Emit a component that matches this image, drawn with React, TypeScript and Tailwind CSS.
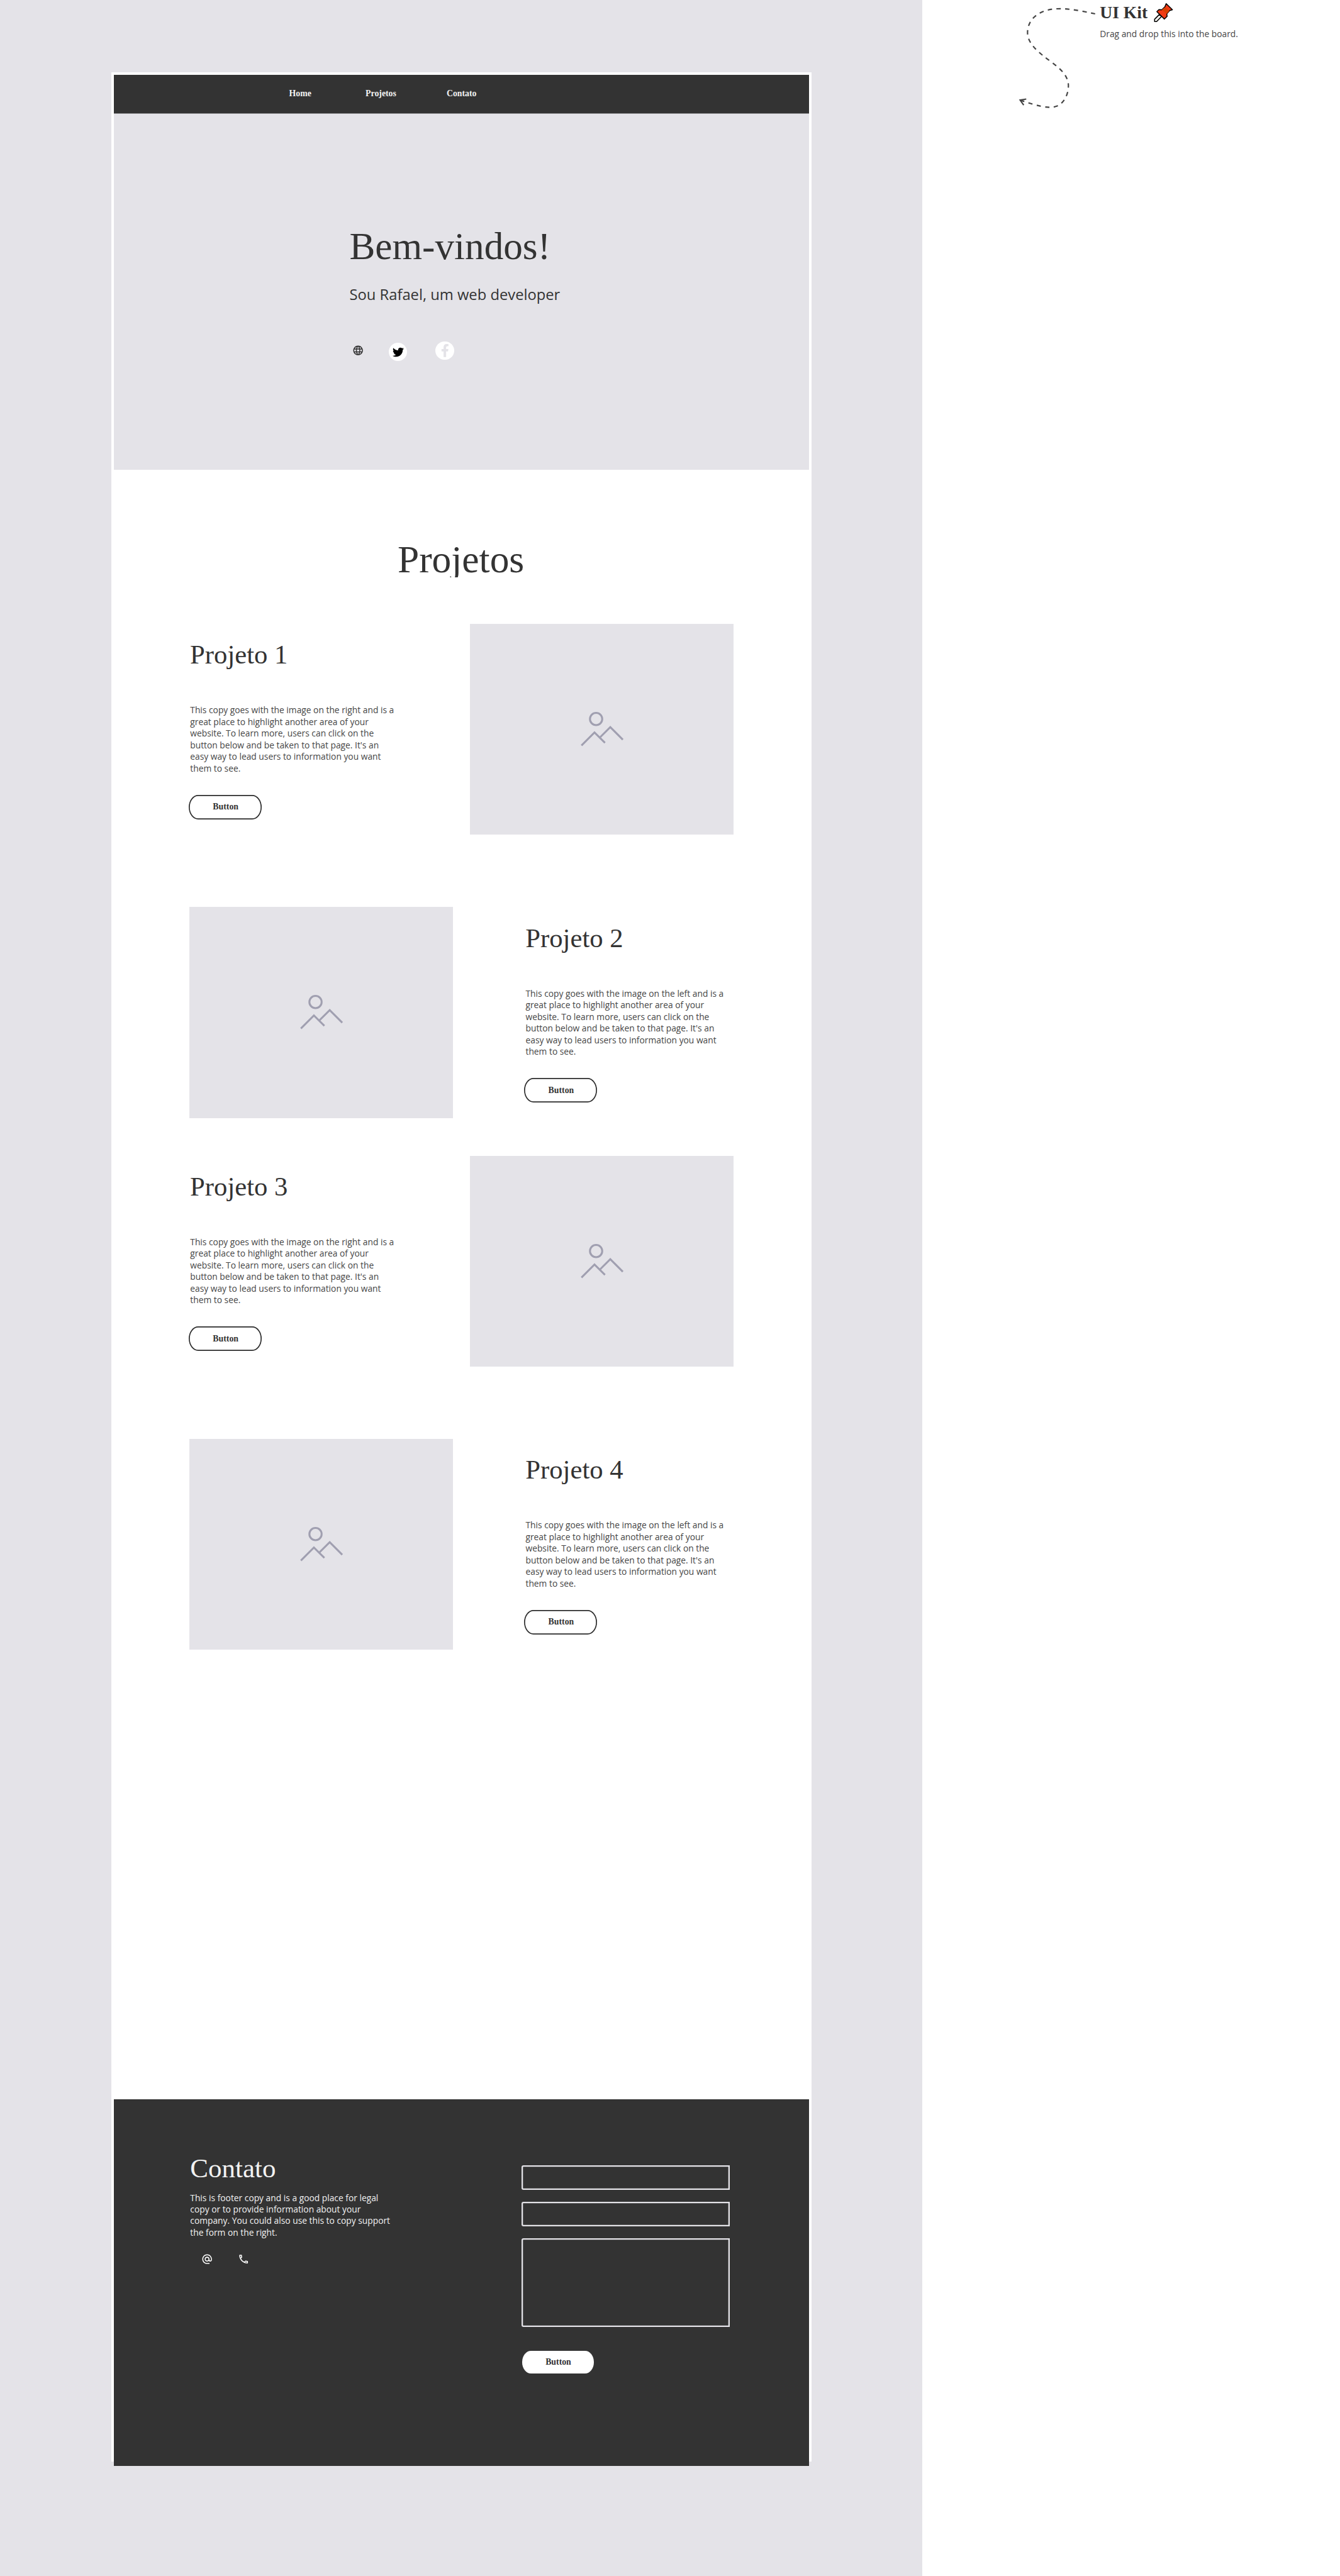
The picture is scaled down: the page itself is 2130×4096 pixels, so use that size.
import React from 'react';
import { MdAlternateEmail, MdLanguage, MdOutlineLocalPhone } from 'react-icons/md';
import { FaTwitter, FaFacebookF } from 'react-icons/fa';

const serif = "font-['Liberation_Serif','Times_New_Roman',serif]";
const sans = "font-['Open_Sans','Noto_Sans',sans-serif]";

function PlaceholderImage() {
  return (
    <div className="h-[335.3px] w-[419px] shrink-0 bg-[#e4e3e8]">
      <svg viewBox="0 0 546 437" className="block h-full w-full" fill="none" stroke="#a09fb0" strokeWidth="4">
        <circle cx="261.3" cy="197.1" r="12.7" />
        <path d="M231 252.1 L258 225 L279.7 246.6" />
        <path d="M269 235.6 L290.7 214 L316.7 240" />
      </svg>
    </div>
  );
}

function ProjectCopy({ title, side }: { title: string; side: string }) {
  return (
    <div className="w-[446.5px] shrink-0 pt-[25.2px]">
      <h3 className={`${serif} pl-[2px] text-[42.7px] leading-[48px] text-[#333333]`}>{title}</h3>
      <p className={`${sans} mt-[55.2px] pl-[2.2px] text-[13.81px] leading-[18.415px] whitespace-nowrap text-[#454545]`}>
        This copy goes with the image on the {side} and is a<br />
        great place to highlight another area of your<br />
        website. To learn more, users can click on the<br />
        button below and be taken to that page. It's an<br />
        easy way to lead users to information you want<br />
        them to see.
      </p>
      <button
        className={`${serif} mt-[32.7px] block h-[39px] w-[116.2px] rounded-[15px/19.5px] bg-white pl-[1px] text-[13.81px] leading-[18px] font-bold text-[#333333] shadow-[inset_0_0_0_1.7px_#2b2b2b]`}
      >
        Button
      </button>
    </div>
  );
}

function PushPin() {
  return (
    <svg viewBox="18 12 122 122" className="mt-[0.4px] ml-[9.8px] h-[31.2px] w-[31.2px]" stroke="#000" strokeLinejoin="round">
      <path d="M53 86 L23 116 L23 130 L36 130 L66 99 Z" fill="#f5f5f0" strokeWidth="6" />
      <path d="M95 19 L134 57 L117 62 L99 82 L101 98 L84 115 L37 69 L50 56 L68 57 L87 39 Z" fill="#f13a15" strokeWidth="6" />
      <path d="M88 40 L115 64 L99 82 L68 57 Z" fill="#d93f00" stroke="none" />
    </svg>
  );
}

function Sheet() {
  return (
    <div className="mt-[115.1px] ml-[176.5px] h-[3798.8px] w-[1113.3px] bg-white px-[4px] pt-[3.8px]">
      <nav className={`${serif} flex h-[62.1px] border-b border-[#8a8a8c] bg-[#333333] pt-[20.6px] pl-[279.1px] text-[13.81px] leading-[20px] font-bold text-[#f2f2f2]`}>
        <a className="w-[121.5px]">Home</a>
        <a className="w-[128.9px]">Projetos</a>
        <a>Contato</a>
      </nav>

      <header className="h-[565.6px] bg-[#e4e3e8] pt-[177.6px] pl-[375px] text-[#333333]">
        <h1 className={`${serif} text-[61.2px] leading-[64px]`}>Bem-vindos!</h1>
        <p className={`${sans} mt-[29.5px] text-[23.75px] leading-[32px]`}>Sou Rafael, um web developer</p>
        <div className="mt-[58.5px] flex items-start">
          <MdLanguage className="mt-[5.3px] ml-[4.6px] h-[18.4px] w-[18.4px]" />
          <span className="mt-[2.8px] ml-[39.8px] flex h-[28.6px] w-[28.6px] items-center justify-center rounded-full bg-white">
            <FaTwitter className="h-[18px] w-[18px] text-black" />
          </span>
          <span className="ml-[45.5px] flex h-[29.4px] w-[29.4px] items-center justify-center rounded-full bg-white">
            <FaFacebookF className="h-[20.7px] w-[20.7px] text-[#e4e3e8]" />
          </span>
        </div>
      </header>

      <main className="pt-[110.7px]">
        <h2 className={`${serif} h-[61px] overflow-hidden pr-[1px] text-center text-[61.4px] leading-[64px] text-[#333333]`}>Projetos</h2>
        <section className="mt-[73.8px] flex pl-[119.6px]">
          <ProjectCopy title="Projeto 1" side="right" />
          <PlaceholderImage />
        </section>
        <section className="mt-[115.1px] flex gap-[113.5px] pl-[120.3px]">
          <PlaceholderImage />
          <ProjectCopy title="Projeto 2" side="left" />
        </section>
        <section className="mt-[59.9px] flex pl-[119.6px]">
          <ProjectCopy title="Projeto 3" side="right" />
          <PlaceholderImage />
        </section>
        <section className="mt-[115.1px] flex gap-[113.5px] pl-[120.3px]">
          <PlaceholderImage />
          <ProjectCopy title="Projeto 4" side="left" />
        </section>
      </main>

      <footer className="mt-[714.8px] flex h-[583.2px] bg-[#333333] pl-[121.8px]">
        <div className="w-[526.4px] pt-[86.2px] text-[#f2f2f2]">
          <h2 className={`${serif} text-[43px] leading-[48px]`}>Contato</h2>
          <p className={`${sans} mt-[13.2px] text-[13.81px] leading-[18.415px] whitespace-nowrap`}>
            This is footer copy and is a good place for legal<br />
            copy or to provide information about your<br />
            company. You could also use this to copy support<br />
            the form on the right.
          </p>
          <div className="mt-[23.7px] flex gap-[39.3px] pl-[17.7px] text-white">
            <MdAlternateEmail className="h-[18.4px] w-[18.4px]" />
            <MdOutlineLocalPhone className="h-[18.4px] w-[18.4px]" />
          </div>
        </div>
        <form className="flex w-[331.3px] flex-col gap-[19.2px] pt-[104.8px]">
          <input className="h-[39.1px] shrink-0 rounded-l-[3px] shadow-[inset_0_0_0_2.3px_#e4e3e8]" />
          <input className="h-[39.1px] shrink-0 rounded-l-[3px] shadow-[inset_0_0_0_2.3px_#e4e3e8]" />
          <textarea className="h-[140.4px] shrink-0 resize-none rounded-l-[3px] shadow-[inset_0_0_0_2.3px_#e4e3e8]" />
          <button
            type="button"
            className={`${serif} mt-[18.6px] ml-[1.5px] h-[36.1px] w-[113.6px] rounded-[14px/18px] bg-white pl-[1px] text-[13.81px] leading-[18px] font-bold text-[#333333]`}
          >
            Button
          </button>
        </form>
      </footer>
    </div>
  );
}

function KitNote() {
  return (
    <aside className="flex items-start pl-[130.5px]">
      <svg viewBox="0 0 576 690" className="h-[176.5px] w-[147.3px]" fill="none" stroke="#444444" strokeWidth="8.5">
        <path
          d="M566 86 C500 72 425 55 352 54 C300 54 262 62 232 76 C180 101 146 145 146 202 C146 265 200 312 250 352 C305 396 400 450 400 532 C400 590 370 648 321 662 C270 678 200 655 98 622"
          strokeDasharray="27 27"
        />
        <path d="M138 616 L100 622 L122 653" />
      </svg>
      <div className="pt-[3.8px] pl-[5px]">
        <h2 className={`${serif} flex h-[32px] items-start text-[27.6px] leading-[32px] font-bold text-[#333333]`}>
          UI Kit
          <PushPin />
        </h2>
        <p className={`${sans} mt-[9.2px] text-[13.81px] leading-[18px] text-[#454545]`}>Drag and drop this into the board.</p>
      </div>
    </aside>
  );
}

export default function App() {
  return (
    <div className="flex h-[4096px] w-[2130px] overflow-hidden bg-white">
      <div className="flex w-[1465.5px] shrink-0 items-start bg-[#e4e3e8]">
        <Sheet />
      </div>
      <KitNote />
    </div>
  );
}
